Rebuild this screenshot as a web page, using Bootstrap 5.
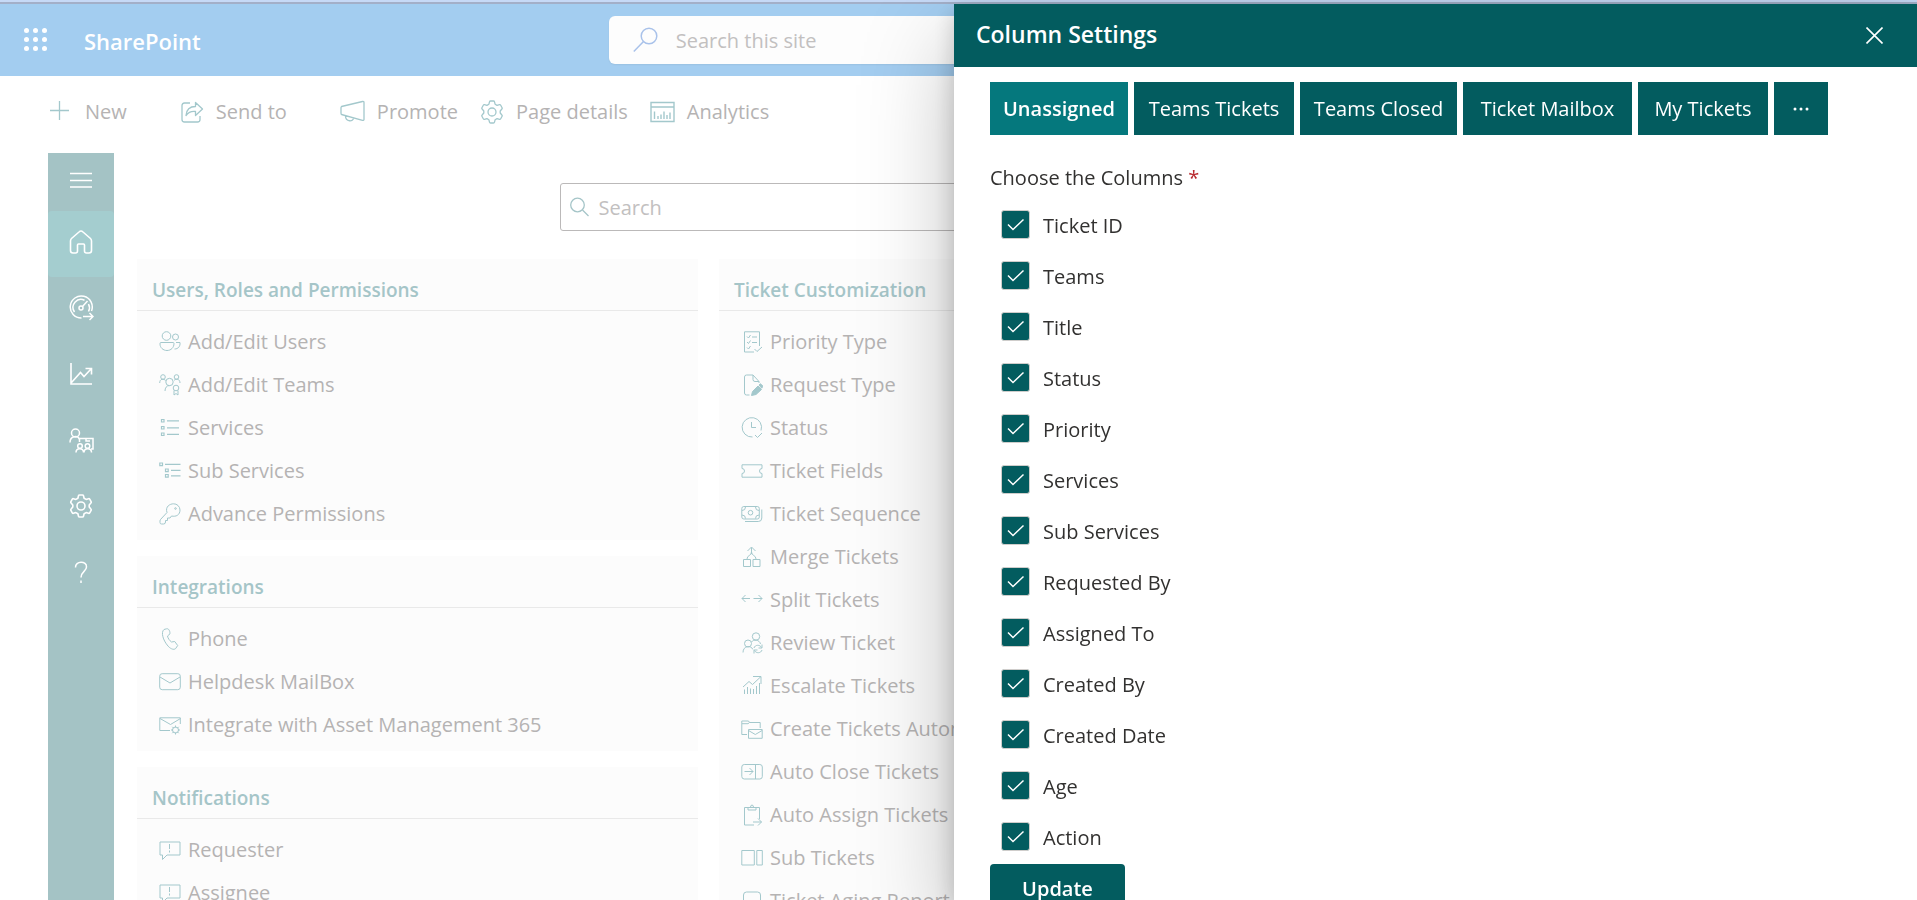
<!DOCTYPE html>
<html lang="en">
<head>
<meta charset="utf-8">
<meta name="viewport" content="width=device-width, initial-scale=1">
<title>Column Settings - SharePoint</title>
<link href="https://cdn.jsdelivr.net/npm/bootstrap@5.3.0/dist/css/bootstrap.min.css" rel="stylesheet">
<style>
  :root { --teal: #035c5f; --teal-active: #05787d; --pale-icon: #a3c8cc; --pale-text: #b5b3b3; --pale-title: #a5c5c8; }
  body { font-family: "Open Sans", "Noto Sans", sans-serif; font-size: 20px; line-height: 28px; color: #323130; background: #fff; }
  a { text-decoration: none; }
  svg { fill: none; stroke: currentColor; flex: none; display: block; }
  .page-shell { height: 100vh; overflow: hidden; }
  .browser-edge { height: 4px; background: #c6d9f6; border-bottom: 2px solid #a3afc8; }
  .suite-bar { height: 72px; background: #a3cdf0; padding: 0 24px; }
  .suite-brand { font-size: 22px; font-weight: 600; color: #fff; margin-left: 37px; padding-top: 2px; }
  .site-search-wrap { margin-left: 408px; height: 48px; width: 700px; background: #fdfdfd; border-radius: 6px; padding: 0 24px; gap: 18px; color: #a9c2ea; box-shadow: 0 1px 2px rgba(0,0,0,.06); }
  .bare-input { border: 0; background: transparent; outline: 0; padding: 2px 0 0; flex: 1; min-width: 0; color: #b5b3b3; }
  .bare-input::placeholder { color: #c2c0c0; opacity: 1; }
  .command-bar { height: 77px; padding: 0 48px 6px; }
  .command-bar a { color: var(--pale-text); gap: 12px; }
  .command-bar .wide-gap { margin-right: 53px; }
  .command-bar .tight-gap { margin-right: 22px; }
  .command-bar svg { color: var(--pale-icon); }
  .rail { width: 66px; background: #a4c3c5; }
  .rail a { height: 66px; color: #fff; display: flex; align-items: center; justify-content: center; padding-bottom: 4px; }
  .rail a.rail-menu { height: 58px; }
  .rail a.active { background: #a4cdcf; border-radius: 4px; }
  .workspace { padding: 30px 55px 0 23px; }
  .ticket-search { width: 880px; height: 48px; border: 1px solid #bbb9b9; border-radius: 3px; padding: 0 9px; gap: 10px; color: #a5c5c8; }
  .tile-grid { --bs-gutter-x: 21px; margin-top: 28px; }
  .tile { background: #fcfcfc; margin-bottom: 16px; }
  .tile h2 { font-size: 19px; line-height: 28px; font-weight: 600; color: var(--pale-title); margin: 0; padding: 17px 15px 6px; border-bottom: 1px solid #e9e9e9; }
  .tile ul { list-style: none; margin: 0; padding: 9px 22px 5px; }
  .tile li a { display: flex; align-items: center; gap: 7px; height: 43px; color: var(--pale-text); white-space: nowrap; }
  .tile li svg { color: var(--pale-icon); }
  .settings-panel.offcanvas { --bs-offcanvas-width: 963px; top: 4px; border: 0; color: #323130; box-shadow: 0 38px 86px rgba(0,0,0,.26), 0 7px 22px rgba(0,0,0,.18); }
  .panel-head { height: 63px; background: var(--teal); color: #fff; padding: 0 34px 4px 22px; }
  .panel-head h1 { font-size: 23px; font-weight: 600; line-height: 30px; margin: 0; }
  .plain-btn { border: 0; background: transparent; color: #fff; padding: 0; }
  .panel-content { padding: 15px 36px 0; }
  .view-tabs { gap: 6px; }
  .view-tabs .btn { height: 53px; border: 0; border-radius: 0; background: var(--teal); color: #fff; font-size: 20px; line-height: 28px; padding: 0; flex: 0 1 auto; white-space: nowrap; }
  .view-tabs .btn.active { background: var(--teal-active); font-weight: 600; }
  .w-a { width: 138px; } .w-b { width: 160px; } .w-c { width: 157px; } .w-d { width: 169px; } .w-e { width: 130px; } .w-f { width: 54px; }
  .column-set { padding: 0 0 2px; }
  .choose-label { font-size: 20px; line-height: 28px; margin: 0 0 7px; padding-top: 29px; float: none; width: auto; }
  .req { color: #b8282d; }
  .column-check { display: flex; align-items: center; gap: 13px; height: 51px; padding: 0 0 0 11px; margin: 0; min-height: 0; }
  .column-check .form-check-input { width: 29px; height: 29px; margin: 0; float: none; border: 1px solid #cfcdcb; border-radius: 3px; background-color: var(--teal); background-size: 21px;
    background-image: url("data:image/svg+xml,%3Csvg xmlns='http://www.w3.org/2000/svg' viewBox='0 0 21 21'%3E%3Cpath d='M3 10.5l5 5L18.500 5.500' fill='none' stroke='%23fff' stroke-width='1.500'/%3E%3C/svg%3E"); }
  .column-check label { padding-top: 3px; }
  .btn-update { width: 135px; height: 50px; border: 0; border-radius: 4px; background: var(--teal); color: #fff; font-size: 20px; font-weight: 600; }
</style>
</head>
<body>
<svg width="0" height="0" class="position-absolute" aria-hidden="true">
  <defs>
    <symbol id="i-gear" viewBox="0 0 24 24"><path d="M10.500 1h3q.8 0 1 .8l.6 2.400 2 1.200 2.400-.7q.8-.2 1.200.5l1.400 2.500q.4.7-.2 1.300L20.200 11v2l1.700 2q.6.6.2 1.300l-1.400 2.500q-.4.7-1.200.5l-2.400-.7-2 1.200-.6 2.400q-.2.8-1 .8h-3q-.8 0-1-.8l-.6-2.400-2-1.200-2.400.7q-.8.2-1.200-.5l-1.400-2.500q-.4-.7.2-1.300L3.800 13v-2L2.100 9q-.6-.6-.2-1.300l1.400-2.500q.4-.7 1.200-.5l2.400.7 2-1.200.6-2.400q.2-.8 1-.8z" stroke-linejoin="round"/><circle cx="12" cy="12" r="4"/></symbol>
    <symbol id="i-bubble" viewBox="0 0 22 22"><path d="M1 3h20v13H8l-4.500 4.500V16H1z"/><path d="M10.500 5v5M10.500 11.500v2"/></symbol>
  </defs>
</svg>

<div class="page-shell d-flex flex-column">
  <div class="browser-edge flex-shrink-0"></div>
  <header class="suite-bar d-flex align-items-center flex-shrink-0">
    <button class="plain-btn" type="button" aria-label="App launcher">
      <svg width="23" height="28" viewBox="0 0 23 28"><g fill="#fff" stroke="none"><circle cx="2.500" cy="4.500" r="2.500"/><circle cx="11.500" cy="4.500" r="2.500"/><circle cx="20.500" cy="4.500" r="2.500"/><circle cx="2.500" cy="13.500" r="2.500"/><circle cx="11.500" cy="13.500" r="2.500"/><circle cx="20.500" cy="13.500" r="2.500"/><circle cx="2.500" cy="22.500" r="2.500"/><circle cx="11.500" cy="22.500" r="2.500"/><circle cx="20.500" cy="22.500" r="2.500"/></g></svg>
    </button>
    <a class="suite-brand" href="#">SharePoint</a>
    <div class="site-search-wrap d-flex align-items-center">
      <svg width="25" height="26" viewBox="0 0 25 26" stroke-width="1.500"><circle cx="16" cy="9" r="7.800"/><path d="M10.500 14.500L.8 24.500"/></svg>
      <input class="bare-input" type="search" placeholder="Search this site" aria-label="Search this site">
    </div>
  </header>

  <nav class="command-bar d-flex align-items-center flex-shrink-0" aria-label="Page commands">
    <a class="d-flex align-items-center wide-gap" href="#"><svg width="25" height="21" viewBox="-2 0 25 21" stroke-width="1.300"><path d="M9.500 0v19M0 9.500h19"/></svg>New</a>
    <a class="d-flex align-items-center wide-gap" href="#"><svg width="24" height="24" viewBox="0 0 24 24" stroke-width="1.300" stroke-linejoin="round"><path d="M10 3H4.500Q2 3 2 5.500v14Q2 22 4.500 22h13q2.500 0 2.500-2.500V16"/><path d="M6 15.500C6.500 9 10 6.500 15.500 6.500V2.500L22.500 9l-7 6.500v-4C11.500 11 8.500 12 6 15.500z"/></svg>Send to</a>
    <a class="d-flex align-items-center tight-gap" href="#"><svg width="25" height="24" viewBox="0 0 25 24" stroke-width="1.300" stroke-linejoin="round"><path d="M1.500 6.500L22.500 1.500Q24 1.300 24 2.500v17q0 1-1.500.8L1.500 14.500Q1 14.300 1 13V7.500zM5.500 16c0 6 8 6 8 2"/></svg>Promote</a>
    <a class="d-flex align-items-center tight-gap" href="#"><svg width="24" height="24" stroke-width="1.300"><use href="#i-gear"/></svg>Page details</a>
    <a class="d-flex align-items-center" href="#"><svg width="25" height="22" viewBox="0 0 25 22" stroke-width="1.400"><path d="M1 1.500h23v19H1zM1 6h23M4.500 10.500V18M8 15v3M11 13.500V18M14 10.500V18M17 14v4M20 11.500V18"/></svg>Analytics</a>
  </nav>

  <div class="d-flex flex-grow-1 ps-5 overflow-hidden">
    <nav class="rail flex-shrink-0" aria-label="Helpdesk">
      <a class="rail-menu" href="#" aria-label="Menu"><svg width="22" height="18" viewBox="0 0 22 18" stroke-width="1.500"><path d="M0 2.500h22M0 9.500h22M0 16h22"/></svg></a>
      <a class="active" href="#" aria-label="Home"><svg width="24" height="26" viewBox="0 0 24 26" stroke-width="1.600" stroke-linejoin="round"><path d="M12 2Q11 2 10 3L2.500 9.500Q1.500 10.500 1.500 12v9.500q0 2.500 2.500 2.500h2.500q2 0 2-2v-6q0-1 1-1h5q1 0 1 1v6q0 2 2 2H20q2.500 0 2.500-2.500V12q0-1.500-1-2.500L14 3Q13 2 12 2z"/></svg></a>
      <a href="#" aria-label="Dashboard"><svg width="25" height="26" viewBox="0 0 25 26" stroke-width="1.500"><path d="M22.500 16a11 11 0 1 0-10 7"/><path d="M5.500 17A8 8 0 0 1 15.500 5.200M19.500 9a8 8 0 0 1 0 7.500"/><circle cx="12" cy="13" r="2"/><path d="M13.500 11.500L18.500 6M14 21.500h10M20.500 18l3.500 3.500-3.500 3.500"/></svg></a>
      <a href="#" aria-label="Reports"><svg width="24" height="24" viewBox="0 0 24 24" stroke-width="1.600"><path d="M2 1v21h21M2.500 20.500l9-10 3.500 4L22 7M16.500 6.500H22.500V12.500"/></svg></a>
      <a href="#" aria-label="Teams"><svg width="25" height="25" viewBox="0 0 25 25" stroke-width="1.500"><circle cx="6.500" cy="5" r="4"/><path d="M1 14.500c0-7 8-7.500 9.500-3M10.500 14v-3.500H24V21h-2M17 10.500v2.500h4"/><circle cx="11" cy="18" r="2.300"/><circle cx="18.500" cy="18" r="2.300"/><path d="M7 24.500c0-5 7.500-5 7.500 0M15 24.500c0-5 7.500-5 7.500 0"/></svg></a>
      <a href="#" aria-label="Settings"><svg width="24" height="24" stroke-width="1.600"><use href="#i-gear"/></svg></a>
      <a href="#" aria-label="Help"><svg width="14" height="24" viewBox="0 0 14 24" stroke-width="1.500"><path d="M1.500 7.500C1 .5 13 .5 12.500 7c0 4.500-5.500 4.500-5.500 10.500M7 20.500v2.500"/></svg></a>
    </nav>

    <main class="workspace flex-grow-1">
      <div class="ticket-search d-flex align-items-center mx-auto">
        <svg width="19" height="20" viewBox="0 0 19 20" stroke-width="1.300"><circle cx="7.500" cy="8" r="6.800"/><path d="M12.500 13l6 6"/></svg>
        <input class="bare-input" type="search" placeholder="Search" aria-label="Search settings">
      </div>
      <div class="row tile-grid">
        <div class="col-4">
          <section class="tile">
            <h2>Users, Roles and Permissions</h2>
            <ul>
              <li><a href="#"><svg width="22" height="22" viewBox="0 0 22 22"><circle cx="7.500" cy="5" r="4.300"/><circle cx="16.500" cy="6" r="3"/><path d="M1.500 11.500h12.500q1 0 1 1c0 4-3 7-7 7s-7-3-7-6.500q0-1.500.5-1.500zM17 11.500h4c.5 4-2 6.500-5.500 6.500"/></svg>Add/Edit Users</a></li>
              <li><a href="#"><svg width="22" height="22" viewBox="0 0 22 22"><circle cx="4" cy="3" r="2.300"/><circle cx="17.500" cy="3" r="2.300"/><circle cx="10.500" cy="8" r="3.700"/><path d="M.7 9c0-4.500 4-4.500 6-2.500M15 6.500c2-2.500 6-1.500 6 2.500M6 17c0-3 1.500-5.500 4.500-5.500"/><circle cx="17" cy="14" r="2.800"/><path d="M15 16.500V21l2-1.500 2 1.500v-4.500"/></svg>Add/Edit Teams</a></li>
              <li><a href="#"><svg width="22" height="22" viewBox="0 0 22 22" stroke-width="1.200"><path d="M2.500 2.500H5V5H2.500zM2.500 9.500H5V12H2.500zM2.500 16H5v2.500H2.500zM8 3.800h12M8 10.800h12M8 17.300h12"/></svg>Services</a></li>
              <li><a href="#"><svg width="22" height="22" viewBox="0 0 22 22" stroke-width="1.200"><path d="M.8 3h2.700v2.700H.8zM6.500 9h2.700v2.700H6.500zM6.500 14.500h2.700v2.700H6.500zM6 4.300h15.500M12 10.300h9.500M12 15.800h9.500"/></svg>Sub Services</a></li>
              <li><a href="#"><svg width="22" height="22" viewBox="0 0 22 22"><path d="M8 9.500C6 3.500 11 .8 14.500.8A6.300 6.300 0 0 1 21 7c0 5-4 7-8.500 6l-1.500 2H8.500v2.500H6.500V19q0 2-2 2H2.500Q1 21 1 19.500V18q0-1 .7-1.700z" stroke-linejoin="round"/><circle cx="16.500" cy="5.500" r=".8"/></svg>Advance Permissions</a></li>
            </ul>
          </section>
          <section class="tile">
            <h2>Integrations</h2>
            <ul>
              <li><a href="#"><svg width="22" height="22" viewBox="0 0 22 22"><path d="M5 1.500l2.500-.7c2-.5 3.500 1.700 3.500 5L8.500 8c.5 2.500 2 4.500 4 6l3.200-.5 3 4-2 3c-2 2-6 0-8.500-3.500C4.500 12.500 1.500 4.500 5 1.500z" stroke-linejoin="round"/></svg>Phone</a></li>
              <li><a href="#"><svg width="22" height="22" viewBox="0 0 22 22"><rect x=".7" y="2.700" width="20.600" height="16" rx="2.500"/><path d="M1 6l10 6 10-6"/></svg>Helpdesk MailBox</a></li>
              <li><a href="#"><svg width="22" height="22" viewBox="0 0 22 22"><path d="M11 16.500H.8V3.800h20.500V10M1 4.500l10.500 6 10-6"/><circle cx="16.500" cy="16" r="3"/><path d="M16.500 11.500v2M16.500 18.500v2M12 16h2M19 16h2M13.300 12.800l1.400 1.400M18.300 17.800l1.400 1.400M19.700 12.800l-1.400 1.400M14.700 17.800l-1.400 1.400"/></svg>Integrate with Asset Management 365</a></li>
            </ul>
          </section>
          <section class="tile">
            <h2>Notifications</h2>
            <ul>
              <li><a href="#"><svg width="22" height="22"><use href="#i-bubble"/></svg>Requester</a></li>
              <li><a href="#"><svg width="22" height="22"><use href="#i-bubble"/></svg>Assignee</a></li>
            </ul>
          </section>
        </div>
        <div class="col-4">
          <section class="tile">
            <h2>Ticket Customization</h2>
            <ul>
              <li><a href="#"><svg width="22" height="22" viewBox="0 0 22 22"><path d="M13 21H3.500V.8h15V15M6 5.500l1.500 1.500L9.500 4M6 11l1.500 1.500 2-3M6 16.500L7.500 18l2-3M11 6h5M11 11.500h5M13.500 18l2.500 2.500 5-4.500"/></svg>Priority Type</a></li>
              <li><a href="#"><svg width="22" height="22" viewBox="0 0 22 22"><path d="M8.500 21H5.500Q3.500 21 3.500 19V3Q3.500 1 5.500 1H12l6 6.500V9M12 1v4.500q0 2 2 2h4"/><path d="M10.500 21.500l1-4L17 12l3.500 3.500-5.500 5zM18 11l1.500-1.200 2.500 2.400-1.300 2z" fill="currentColor"/></svg>Request Type</a></li>
              <li><a href="#"><svg width="22" height="22" viewBox="0 0 22 22"><path d="M11.500 20A9.700 9.700 0 1 1 20 13.500M10.500 5v5.500H15M14 18l2.500 2.500 4.500-4.500"/></svg>Status</a></li>
              <li><a href="#"><svg width="22" height="22" viewBox="0 0 22 22"><path d="M1 4.800h20v3.700q-2.500 0-2.500 2.500t2.500 2.500v3.700H1v-3.700q2.500 0 2.500-2.500T1 8.500z" stroke-linejoin="round"/></svg>Ticket Fields</a></li>
              <li><a href="#"><svg width="22" height="22" viewBox="0 0 22 22"><rect x=".8" y="3.500" width="17.500" height="12.500" rx="2"/><circle cx="9.500" cy="9.700" r="2.300"/><path d="M1 7.500q3.500 0 3.500-3.500M14.500 4q0 3.500 3.500 3.500M1 12q3.500 0 3.500 3.500M14.500 15.500q0-3.500 3.500-3.500M20.800 6.500v8.500q0 3.500-3.500 3.500H4"/></svg>Ticket Sequence</a></li>
              <li><a href="#"><svg width="22" height="22" viewBox="0 0 22 22"><path d="M2.500 13.500h7v7h-7zM12 13.500h7v7h-7zM6 13c0-4 4.500-3 4.500-7M15 13c0-4-4.500-3-4.500-7M10.500 8V1.500M6.500 5l4-4 4 4"/></svg>Merge Tickets</a></li>
              <li><a href="#"><svg width="22" height="22" viewBox="0 0 22 22"><path d="M1 9.500h8M12.500 9.500H21M4.500 6L1 9.500 4.500 13M17.500 6L21 9.500 17.500 13"/></svg>Split Tickets</a></li>
              <li><a href="#"><svg width="22" height="22" viewBox="0 0 22 22"><circle cx="15" cy="4.500" r="3.700"/><circle cx="7" cy="11.500" r="3.500"/><path d="M2 20.500c0-7 8-7.500 10-3M10.500 10c2-3 8-2.500 9 2M13 16c1-3.500 6-3.500 7.500-.5M21 12.500v3.500h-3.500M21 18c-1 3.500-6 3.500-7.500.5M13 21.500V18h3.500"/></svg>Review Ticket</a></li>
              <li><a href="#"><svg width="22" height="22" viewBox="0 0 22 22"><path d="M2 12l6-5.500 3.500 3L20 1.500M12 1.500h8V9M3.500 19v-4.500M6.500 19v-7M9.500 19v-5.500M12.500 19v-5M15.500 19v-8M18.500 19V8"/></svg>Escalate Tickets</a></li>
              <li><a href="#"><svg width="22" height="22" viewBox="0 0 22 22"><path d="M6 16.500H.8V3H7.500l1 1.500h10.700V10M1 5.700h6l1.500-1.200M7.500 11.500h13.700v8.800H7.500zM7.500 12.500l6.800 4 6.800-4"/></svg>Create Tickets Automatically</a></li>
              <li><a href="#"><svg width="22" height="22" viewBox="0 0 22 22"><rect x=".8" y="3.500" width="20.500" height="14.500" rx="2.500"/><path d="M14.500 3.500V18M3.500 10.500H12M8.500 7l3.500 3.500L8.500 14"/></svg>Auto Close Tickets</a></li>
              <li><a href="#"><svg width="22" height="22" viewBox="0 0 22 22"><path d="M13 21H3.500V3.500h15V15M7 6V3.500h2.500q0-2.500 1.500-2.500t1.500 2.500H15V6zM12 18h8.500M17 14.500l3.500 3.500-3.500 3.500"/></svg>Auto Assign Tickets</a></li>
              <li><a href="#"><svg width="22" height="22" viewBox="0 0 22 22"><path d="M.8 3.500h12.500v14.500H.8zM15.800 3.500h5.500v14.500h-5.500z"/></svg>Sub Tickets</a></li>
              <li><a href="#"><svg width="22" height="22" viewBox="0 0 22 22"><rect x="2.500" y="2" width="17" height="18" rx="3"/></svg>Ticket Aging Report</a></li>
            </ul>
          </section>
        </div>
      </div>
    </main>
  </div>
</div>

<aside class="offcanvas offcanvas-end show settings-panel" data-bs-backdrop="false" data-bs-scroll="true" aria-labelledby="panelTitle">
  <div class="panel-head d-flex align-items-center justify-content-between flex-shrink-0">
    <h1 id="panelTitle">Column Settings</h1>
    <button class="plain-btn" type="button" aria-label="Close"><svg class="mt-1" width="17" height="17" viewBox="0 0 17 17" stroke-width="1.600"><path d="M.5.5l16 16M16.500.5l-16 16"/></svg></button>
  </div>
  <form class="panel-content overflow-hidden">
    <div class="view-tabs d-flex">
      <button class="btn active w-a" type="button">Unassigned</button>
      <button class="btn w-b" type="button">Teams Tickets</button>
      <button class="btn w-c" type="button">Teams Closed</button>
      <button class="btn w-d" type="button">Ticket Mailbox</button>
      <button class="btn w-e" type="button">My Tickets</button>
      <button class="btn w-f" type="button" aria-label="More views"><svg class="mx-auto" width="16" height="4" viewBox="0 0 16 4"><g fill="#fff" stroke="none"><circle cx="2" cy="2" r="1.500"/><circle cx="8" cy="2" r="1.500"/><circle cx="14" cy="2" r="1.500"/></g></svg></button>
    </div>
    <fieldset class="column-set">
      <legend class="choose-label">Choose the Columns <span class="req">*</span></legend>
      <div class="form-check column-check"><input class="form-check-input" type="checkbox" id="c1" checked><label for="c1">Ticket ID</label></div>
      <div class="form-check column-check"><input class="form-check-input" type="checkbox" id="c2" checked><label for="c2">Teams</label></div>
      <div class="form-check column-check"><input class="form-check-input" type="checkbox" id="c3" checked><label for="c3">Title</label></div>
      <div class="form-check column-check"><input class="form-check-input" type="checkbox" id="c4" checked><label for="c4">Status</label></div>
      <div class="form-check column-check"><input class="form-check-input" type="checkbox" id="c5" checked><label for="c5">Priority</label></div>
      <div class="form-check column-check"><input class="form-check-input" type="checkbox" id="c6" checked><label for="c6">Services</label></div>
      <div class="form-check column-check"><input class="form-check-input" type="checkbox" id="c7" checked><label for="c7">Sub Services</label></div>
      <div class="form-check column-check"><input class="form-check-input" type="checkbox" id="c8" checked><label for="c8">Requested By</label></div>
      <div class="form-check column-check"><input class="form-check-input" type="checkbox" id="c9" checked><label for="c9">Assigned To</label></div>
      <div class="form-check column-check"><input class="form-check-input" type="checkbox" id="c10" checked><label for="c10">Created By</label></div>
      <div class="form-check column-check"><input class="form-check-input" type="checkbox" id="c11" checked><label for="c11">Created Date</label></div>
      <div class="form-check column-check"><input class="form-check-input" type="checkbox" id="c12" checked><label for="c12">Age</label></div>
      <div class="form-check column-check"><input class="form-check-input" type="checkbox" id="c13" checked><label for="c13">Action</label></div>
    </fieldset>
    <button class="btn btn-update" type="submit">Update</button>
  </form>
</aside>
<script src="https://cdn.jsdelivr.net/npm/bootstrap@5.3.0/dist/js/bootstrap.bundle.min.js"></script>
</body>
</html>
